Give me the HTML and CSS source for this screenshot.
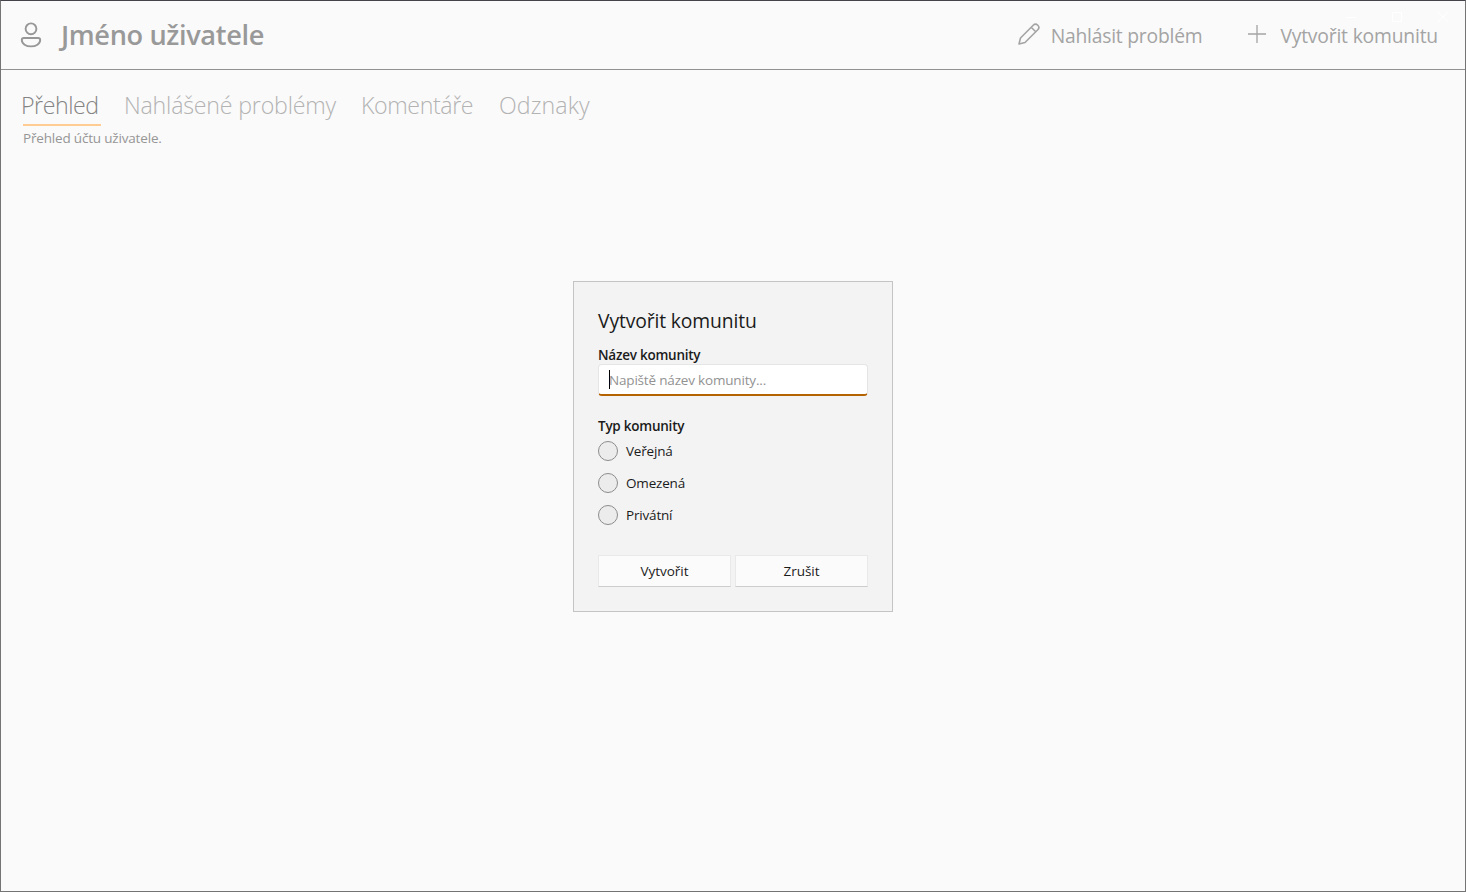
FILE: index.html
```html
<!DOCTYPE html>
<html lang="cs">
<head>
<meta charset="utf-8">
<title>Jméno uživatele</title>
<link rel="stylesheet" href="styles.css">
</head>
<body>
<div class="window">
  <header class="header">
    <svg class="user-icon" viewBox="0 0 22 26" fill="none" stroke="currentColor" stroke-width="1.900"><circle cx="11" cy="6.800" r="5.400"/><path d="M3.900 16h14.200c1.200 0 2.100.9 2.100 2.100 0 3.800-4.300 6.300-9.200 6.300s-9.200-2.500-9.200-6.300c0-1.200.9-2.100 2.100-2.100z"/></svg>
    <h1 class="user-name"><span>Jméno uživatele</span></h1>
    <nav class="actions">
      <button class="action report"><svg class="pen-icon" viewBox="0 0 22 22" fill="none" stroke="currentColor" stroke-width="1.600" stroke-linejoin="round"><path d="M1 21l1.500-6L15.200 2.200a3.200 3.200 0 0 1 4.600 4.600L7 19.500z M13.200 4.300l4.500 4.500"/></svg><span>Nahlásit problém</span></button>
      <button class="action create"><svg class="plus-icon" viewBox="0 0 18 18" fill="none" stroke="currentColor" stroke-width="1.300"><path d="M9 0v18M0 9h18"/></svg><span>Vytvořit komunitu</span></button>
    </nav>
  </header>
  <svg class="caption-buttons" viewBox="0 0 104 12" fill="none" stroke="#fff"><path d="M1 6.500h10M47.500 1.500h9v9h-9zM93 1l10 10M103 1L93 11"/></svg>
  <main class="content">
    <nav class="tabs">
      <a class="tab selected">Přehled</a>
      <a class="tab reported">Nahlášené problémy</a>
      <a class="tab comments">Komentáře</a>
      <a class="tab badges">Odznaky</a>
    </nav>
    <p class="summary"><span>Přehled účtu uživatele.</span></p>
  </main>
  <form class="dialog">
    <h2 class="dialog-title"><span>Vytvořit komunitu</span></h2>
    <label class="label name-label">Název komunity</label>
    <div class="field"><span class="caret"></span><span class="placeholder">Napiště název komunity...</span></div>
    <div class="label type-label">Typ komunity</div>
    <div class="options">
      <label class="option"><i class="radio"></i><span>Veřejná</span></label>
      <label class="option"><i class="radio"></i><span>Omezená</span></label>
      <label class="option"><i class="radio"></i><span>Privátní</span></label>
    </div>
    <div class="buttons">
      <button class="button" type="button">Vytvořit</button>
      <button class="button" type="button">Zrušit</button>
    </div>
  </form>
</div>
</body>
</html>
```
FILE: styles.css
```css
* { box-sizing: border-box; }
body { margin: 0; background: #fafafa; color: #1b1b1b; font: 13.5px/20px "Open Sans", "Noto Sans", sans-serif; letter-spacing: -0.18px; }
h1, h2, p { margin: 0; }
button { border: 0; padding: 0; background: none; color: inherit; font: inherit; letter-spacing: inherit; }
svg { display: block; flex: none; }
.window { position: relative; height: 892px; border: 1px solid #747474; border-top-color: #45434a; background: #fafafa; }
.header { display: flex; align-items: center; height: 69px; padding: 0 27px 0 19px; border-bottom: 1px solid #919191; color: #999; }
.user-icon { width: 22px; height: 26px; color: #979797; }
.user-name { margin-left: 19px; font-size: 27.2px; line-height: 36px; font-weight: 600; letter-spacing: -0.37px; }
.actions { display: flex; gap: 46px; margin-left: auto; }
.action { display: flex; align-items: center; font-size: 19.3px; line-height: 28px; letter-spacing: -0.18px; color: #a4a4a4; white-space: nowrap; }
.action.report { letter-spacing: -0.22px; }
.action span { padding-top: 2px; }
.pen-icon { width: 22px; height: 22px; margin: -2px 11px 0 0; }
.plus-icon { width: 18px; height: 18px; margin: -2px 14px 0 0; }
.caption-buttons { position: absolute; left: 1344px; top: 10px; width: 104px; height: 12px; }
.content { padding: 20px; }
.tabs { display: grid; grid-template-columns: 103px 237px 138px auto; font-size: 23.2px; line-height: 31px; font-weight: 300; letter-spacing: -0.2px; color: #b3b3b3; }
.selected { height: 36px; color: #848484; letter-spacing: -0.45px; background: linear-gradient(#ffcc94, #ffcc94) 2px 34px / 78px 2px no-repeat; }
.comments { letter-spacing: -0.4px; }
.badges { letter-spacing: 0.1px; }
.summary { margin: 2px 0 0 2px; color: #969696; }
.dialog { position: absolute; left: 572px; top: 280px; width: 320px; height: 331px; padding: 25px 24px 24px; border: 1px solid #c4c4c4; background: #f3f3f3; }
.dialog-title { font-size: 19.3px; line-height: 28px; font-weight: 400; letter-spacing: -0.12px; }
.label { display: block; height: 20px; font-weight: 600; letter-spacing: -0.24px; }
.name-label { height: 19px; margin-top: 10px; }
.field { display: flex; align-items: center; width: 270px; height: 32px; padding: 0 10px; border: 1px solid #e5e5e5; border-bottom: 2px solid #b56200; border-radius: 4px; background: #fff; color: #929292; }
.caret { width: 1px; height: 19px; margin-right: -1px; background: #000; }
.type-label { margin-top: 20px; }
.options { display: grid; grid-auto-rows: 32px; margin-top: -1px; }
.option { display: flex; align-items: center; gap: 8px; height: 32px; }
.radio { width: 20px; height: 20px; border: 1px solid #8c8c8c; border-radius: 50%; background: #ececec; }
.buttons { display: grid; grid-template-columns: 133px 133px; gap: 4px; margin-top: 24px; }
.button { height: 32px; border: 1px solid #e9e9e9; border-bottom-color: #ccc; background: #fbfbfb; letter-spacing: -0.05px; }
```
